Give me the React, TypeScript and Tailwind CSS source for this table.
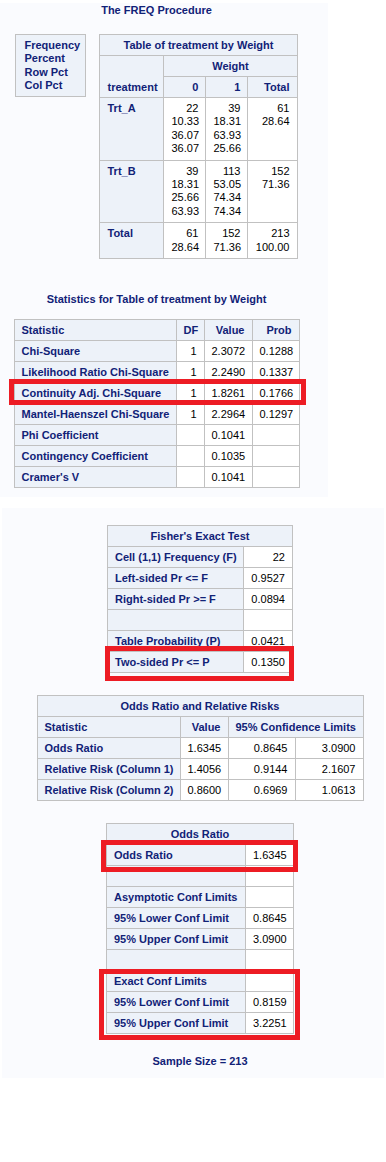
import React from "react";

// SAS HTMLBlue-ish palette
const hd = "border border-[#c1c1c1] bg-[#edf2f9] text-[#112277] font-bold px-[7px] pt-[4px] pb-[3px] align-top whitespace-nowrap";
const dc = "border border-[#c1c1c1] bg-white text-black px-[7px] pt-[4px] pb-[3px] align-top text-right whitespace-nowrap";
const tall = "border border-[#c1c1c1] bg-white text-black px-[7px] py-[4px] leading-[13.4px] align-top text-right whitespace-nowrap";
const tallHd = "border border-[#c1c1c1] bg-[#edf2f9] text-[#112277] font-bold px-[7px] py-[4px] leading-[13.4px] align-top text-left whitespace-nowrap";

const Lines = ({ v }: { v: string[] }) => (
    <>
        {v.map((x, i) => (
            <div key={i}>{x}</div>
        ))}
    </>
);

const Mark = ({ className }: { className: string }) => (
    <div className={`absolute border-[5px] border-[#ed1c24] pointer-events-none ${className}`} />
);

const CrossTab = () => (
    <table className="border-collapse table-fixed w-[197px]">
        <colgroup>
            <col className="w-[64px]" />
            <col className="w-[42px]" />
            <col className="w-[42px]" />
            <col className="w-[49px]" />
        </colgroup>
        <thead>
            <tr>
                <th colSpan={4} className={`${hd} text-center`}>Table of treatment by Weight</th>
            </tr>
            <tr>
                <th rowSpan={2} className={`${hd} text-left !align-bottom`}>treatment</th>
                <th colSpan={3} className={`${hd} text-center`}>Weight</th>
            </tr>
            <tr>
                <th className={`${hd} text-right`}>0</th>
                <th className={`${hd} text-right`}>1</th>
                <th className={`${hd} text-right`}>Total</th>
            </tr>
        </thead>
        <tbody>
            <tr>
                <th className={tallHd}>Trt_A</th>
                <td className={tall}><Lines v={["22", "10.33", "36.07", "36.07"]} /></td>
                <td className={tall}><Lines v={["39", "18.31", "63.93", "25.66"]} /></td>
                <td className={tall}><Lines v={["61", "28.64"]} /></td>
            </tr>
            <tr>
                <th className={tallHd}>Trt_B</th>
                <td className={tall}><Lines v={["39", "18.31", "25.66", "63.93"]} /></td>
                <td className={tall}><Lines v={["113", "53.05", "74.34", "74.34"]} /></td>
                <td className={tall}><Lines v={["152", "71.36"]} /></td>
            </tr>
            <tr>
                <th className={tallHd}>Total</th>
                <td className={tall}><Lines v={["61", "28.64"]} /></td>
                <td className={tall}><Lines v={["152", "71.36"]} /></td>
                <td className={tall}><Lines v={["213", "100.00"]} /></td>
            </tr>
        </tbody>
    </table>
);

const stats: [string, string, string, string][] = [
    ["Chi-Square", "1", "2.3072", "0.1288"],
    ["Likelihood Ratio Chi-Square", "1", "2.2490", "0.1337"],
    ["Continuity Adj. Chi-Square", "1", "1.8261", "0.1766"],
    ["Mantel-Haenszel Chi-Square", "1", "2.2964", "0.1297"],
    ["Phi Coefficient", "", "0.1041", ""],
    ["Contingency Coefficient", "", "0.1035", ""],
    ["Cramer's V", "", "0.1041", ""],
];

const fisher: [string, string][] = [
    ["Cell (1,1) Frequency (F)", "22"],
    ["Left-sided Pr <= F", "0.9527"],
    ["Right-sided Pr >= F", "0.0894"],
    ["\u00a0", ""],
    ["Table Probability (P)", "0.0421"],
    ["Two-sided Pr <= P", "0.1350"],
];

const rr: [string, string, string, string][] = [
    ["Odds Ratio", "1.6345", "0.8645", "3.0900"],
    ["Relative Risk (Column 1)", "1.4056", "0.9144", "2.1607"],
    ["Relative Risk (Column 2)", "0.8600", "0.6969", "1.0613"],
];

const odds: [string, string][] = [
    ["Odds Ratio", "1.6345"],
    ["\u00a0", ""],
    ["Asymptotic Conf Limits", ""],
    ["95% Lower Conf Limit", "0.8645"],
    ["95% Upper Conf Limit", "3.0900"],
    ["\u00a0", ""],
    ["Exact Conf Limits", ""],
    ["95% Lower Conf Limit", "0.8159"],
    ["95% Upper Conf Limit", "3.2251"],
];

export default function App() {
    return (
        <div className="min-h-[1162px] w-[386px] bg-white font-['Liberation_Sans',Arial,sans-serif] text-[11px] leading-[13px]">
            {/* first page of output */}
            <div className="mt-[3px] w-[328px] bg-[#fafbfe] pr-[15px] pb-[9px] flex flex-col items-center">
                <div className="font-bold text-[#112277] leading-[14px]">The FREQ Procedure</div>

                <div className="mt-[17px] flex items-start gap-[13px]">
                    <div className="w-[71px] border border-[#c1c1c1] bg-[#edf2f9] text-[#112277] font-bold pl-[8px] pt-[4px] pb-[4px] leading-[13.3px]">
                        <div>Frequency</div>
                        <div>Percent</div>
                        <div>Row Pct</div>
                        <div>Col Pct</div>
                    </div>
                    <CrossTab />
                </div>

                <div className="mt-[33px] font-bold text-[#112277] leading-[14px]">Statistics for Table of treatment by Weight</div>

                <div className="relative mt-[13px]">
                    <table className="border-collapse table-fixed w-[285px]">
                        <colgroup>
                            <col className="w-[162px]" />
                            <col className="w-[28px]" />
                            <col className="w-[48px]" />
                            <col className="w-[47px]" />
                        </colgroup>
                        <thead>
                            <tr>
                                <th className={`${hd} text-left`}>Statistic</th>
                                <th className={`${hd} text-right`}>DF</th>
                                <th className={`${hd} text-right`}>Value</th>
                                <th className={`${hd} text-right`}>Prob</th>
                            </tr>
                        </thead>
                        <tbody>
                            {stats.map(([s, df, v, p]) => (
                                <tr key={s}>
                                    <th className={`${hd} text-left`}>{s}</th>
                                    <td className={dc}>{df}</td>
                                    <td className={dc}>{v}</td>
                                    <td className={dc}>{p}</td>
                                </tr>
                            ))}
                        </tbody>
                    </table>
                    <Mark className="left-[-5px] top-[60px] w-[297px] h-[26px]" />
                </div>
            </div>

            {/* second page of output */}
            <div className="mt-[11px] ml-[2px] w-[382px] bg-[#fafbfe] pl-[14px] pt-[17px] pb-[10px] flex flex-col items-center">
                <div className="relative">
                    <table className="border-collapse table-fixed w-[185px]">
                        <colgroup>
                            <col className="w-[136px]" />
                            <col className="w-[49px]" />
                        </colgroup>
                        <thead>
                            <tr>
                                <th colSpan={2} className={`${hd} text-center`}>Fisher's Exact Test</th>
                            </tr>
                        </thead>
                        <tbody>
                            {fisher.map(([s, v], i) => (
                                <tr key={i}>
                                    <th className={`${hd} text-left`}>{s}</th>
                                    <td className={dc}>{v}</td>
                                </tr>
                            ))}
                        </tbody>
                    </table>
                    <Mark className="left-[-2px] top-[121px] w-[189px] h-[35px]" />
                </div>

                <table className="mt-[22px] border-collapse table-fixed w-[326px]">
                    <colgroup>
                        <col className="w-[143px]" />
                        <col className="w-[48px]" />
                        <col className="w-[67px]" />
                        <col className="w-[68px]" />
                    </colgroup>
                    <thead>
                        <tr>
                            <th colSpan={4} className={`${hd} text-center`}>Odds Ratio and Relative Risks</th>
                        </tr>
                        <tr>
                            <th className={`${hd} text-left`}>Statistic</th>
                            <th className={`${hd} text-right`}>Value</th>
                            <th colSpan={2} className={`${hd} text-center`}>95% Confidence Limits</th>
                        </tr>
                    </thead>
                    <tbody>
                        {rr.map(([s, v, lo, hi]) => (
                            <tr key={s}>
                                <th className={`${hd} text-left`}>{s}</th>
                                <td className={dc}>{v}</td>
                                <td className={dc}>{lo}</td>
                                <td className={dc}>{hi}</td>
                            </tr>
                        ))}
                    </tbody>
                </table>

                <div className="relative mt-[22px]">
                    <table className="border-collapse table-fixed w-[187px]">
                        <colgroup>
                            <col className="w-[139px]" />
                            <col className="w-[48px]" />
                        </colgroup>
                        <thead>
                            <tr>
                                <th colSpan={2} className={`${hd} text-center`}>Odds Ratio</th>
                            </tr>
                        </thead>
                        <tbody>
                            {odds.map(([s, v], i) => (
                                <tr key={i}>
                                    <th className={`${hd} text-left`}>{s}</th>
                                    <td className={dc}>{v}</td>
                                </tr>
                            ))}
                        </tbody>
                    </table>
                    <Mark className="left-[-5px] top-[17px] w-[197px] h-[32px]" />
                    <Mark className="left-[-7px] top-[146px] w-[201px] h-[71px]" />
                </div>

                <div className="mt-[20px] font-bold text-[#112277] leading-[14px]">Sample Size = 213</div>
            </div>
        </div>
    );
}
